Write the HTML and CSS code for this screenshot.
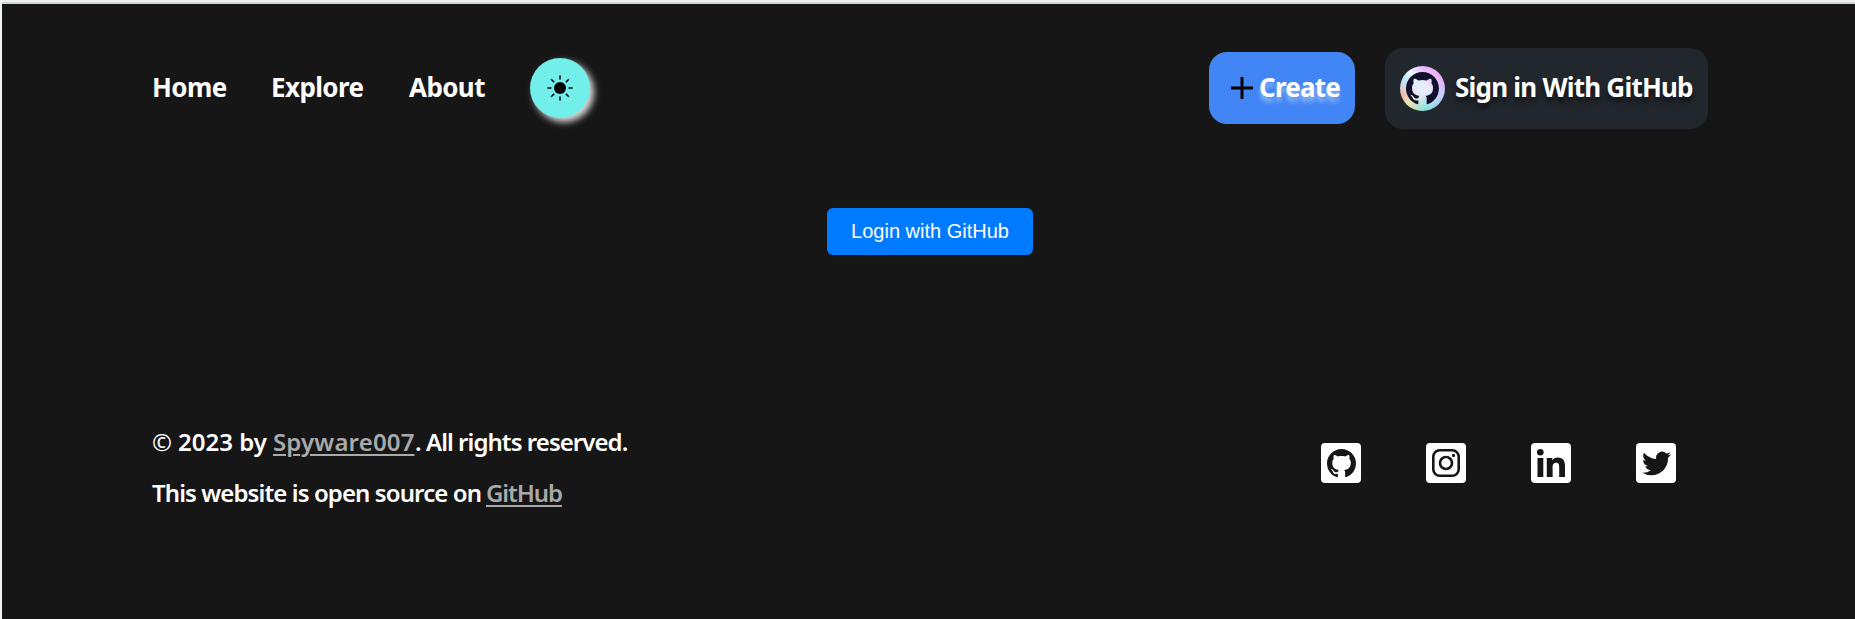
FILE: index.html
```html
<!DOCTYPE html>
<html lang="en">
<head>
<meta charset="utf-8">
<title>Login</title>
<link rel="stylesheet" href="styles.css">
</head>
<body>
<svg width="0" height="0" class="defs">
  <symbol id="octocat" viewBox="0 0 16 16"><path d="M8 0C3.58 0 0 3.58 0 8c0 3.54 2.29 6.53 5.47 7.59.4.07.55-.17.55-.38 0-.19-.01-.82-.01-1.49-2.01.37-2.53-.49-2.69-.94-.09-.23-.48-.94-.82-1.13-.28-.15-.68-.52-.01-.53.63-.01 1.08.58 1.23.82.72 1.21 1.87.87 2.33.66.07-.52.28-.87.51-1.07-1.78-.2-3.64-.89-3.64-3.95 0-.87.31-1.59.82-2.15-.08-.2-.36-1.02.08-2.12 0 0 .67-.21 2.2.82.64-.18 1.32-.27 2-.27s1.36.09 2 .27c1.53-1.04 2.2-.82 2.2-.82.44 1.1.16 1.92.08 2.12.51.56.82 1.27.82 2.15 0 3.07-1.87 3.75-3.65 3.95.29.25.54.73.54 1.48 0 1.07-.01 1.93-.01 2.2 0 .21.15.46.55.38A8.01 8.01 0 0 0 16 8c0-4.42-3.58-8-8-8z"/></symbol>
</svg>
<header class="header">
  <nav class="nav">
    <a class="nav-link home">Home</a>
    <a class="nav-link explore">Explore</a>
    <a class="nav-link about">About</a>
    <button class="toggle" aria-label="Toggle theme">
      <svg width="26" height="26" viewBox="0 0 26 26"><circle cx="13" cy="13" r="6"/><path d="M13 .5v4M13 21.500v4M.5 13h4M21.500 13h4M4.200 4.200l3 3M18.800 18.800l3 3M4.200 21.800l3-3M18.800 7.200l3-3" stroke="#000" stroke-width="1.500"/></svg>
    </button>
  </nav>
  <div class="actions">
    <button class="create">
      <svg width="22" height="22" viewBox="0 0 22 22"><path d="M11 0v22M0 11h22" stroke="#000" stroke-width="3"/></svg>
      <span class="create-text">Create</span>
    </button>
    <button class="signin">
      <span class="avatar"><svg width="33" height="33" fill="#10102a"><use href="#octocat"/></svg></span>
      <span class="signin-text">Sign in With GitHub</span>
    </button>
  </div>
</header>
<main class="main"><button class="login">Login with GitHub</button></main>
<footer class="footer">
  <div class="legal">
    <p class="line"><span class="copy">©</span><span class="year">2023 by</span><a class="link author">Spyware007</a><span class="rights">. All rights reserved.</span></p>
    <p class="line"><span class="source">This website is open source on</span><a class="link repo">GitHub</a></p>
  </div>
  <div class="social">
    <a class="tile"><svg width="29" height="29" fill="#161616"><use href="#octocat"/></svg></a>
    <a class="tile"><svg width="28" height="28" viewBox="0 0 28 28" fill="none" stroke="#161616" stroke-width="2.600"><rect x="1.300" y="1.300" width="25.400" height="25.400" rx="6.500"/><circle cx="14" cy="14" r="6"/><rect x="20" y="5" width="3" height="3" rx="1" fill="#161616" stroke="none"/></svg></a>
    <a class="tile"><svg width="28" height="28" viewBox="0 0 28 28" fill="#161616"><circle cx="3.300" cy="3.300" r="3.300"/><path d="M.5 9h5.800v19H.5zM9.800 9h5.500v2.600c.9-1.700 2.700-3 5.400-3 5.700 0 7.300 3.700 7.300 9V28h-5.800v-9.300c0-2.300 0-5-3.100-5s-3.500 2.400-3.500 4.900V28H9.800z"/></svg></a>
    <a class="tile"><svg width="29" height="29" viewBox="0 0 24 24" fill="#161616"><path d="M23.953 4.570a10 10 0 01-2.825.775 4.958 4.958 0 002.163-2.723c-.951.555-2.005.959-3.127 1.184a4.920 4.920 0 00-8.384 4.482C7.690 8.095 4.067 6.130 1.640 3.162a4.822 4.822 0 00-.666 2.475c0 1.710.87 3.213 2.188 4.096a4.904 4.904 0 01-2.228-.616v.060a4.923 4.923 0 003.946 4.827 4.996 4.996 0 01-2.212.085 4.936 4.936 0 004.604 3.417 9.867 9.867 0 01-6.102 2.105c-.390 0-.779-.023-1.170-.067a13.995 13.995 0 007.557 2.209c9.053 0 13.998-7.496 13.998-13.985 0-.210 0-.420-.015-.630A9.935 9.935 0 0024 4.590z"/></svg></a>
  </div>
</footer>
</body>
</html>
```
FILE: styles.css
```css
* { box-sizing: border-box; }
body {
  margin: 0;
  height: 619px;
  overflow: hidden;
  background: #161616;
  border-top: 2px solid #f0f2f2;
  border-left: 2px solid #f0f2f2;
  box-shadow: inset 0 2px #d0d6d8;
  color: #fff;
  font: 600 26px/36px "Noto Sans", "Open Sans", sans-serif;
  display: flex;
  flex-direction: column;
}
.defs { display: none; }
button { border: 0; padding: 0; font: inherit; color: inherit; display: flex; align-items: center; }
.header { display: flex; justify-content: space-between; align-items: center; height: 81px; margin: 46px 147px 0 150px; }
.nav, .actions { display: flex; align-items: center; }
.nav-link { white-space: nowrap; padding-bottom: 3px; letter-spacing: -.6px; font-weight: 700; }
.home { width: 119px; }
.explore { width: 138px; }
.about { width: 121px; }
.toggle { width: 60px; height: 60px; margin-bottom: 1px; justify-content: center; border-radius: 50%; background: #72eeeb; box-shadow: 4px 4px 7px #ddd; }
.actions { gap: 30px; }
.create { width: 146px; height: 72px; margin-bottom: 1px; padding-left: 22px; gap: 6px; border-radius: 18px; background: #4285f4; text-shadow: 0 5px 4px rgba(255,255,255,.4); }
.signin { width: 323px; height: 81px; padding-left: 15px; gap: 10px; border-radius: 18px; background: #22262d; text-shadow: 0 5px 4px rgba(0,0,0,.5); }
.create-text, .signin-text { white-space: nowrap; padding-bottom: 3px; font-weight: 700; }
.create-text { letter-spacing: -.8px; }
.signin-text { letter-spacing: -.78px; }
.avatar { width: 45px; height: 45px; flex: none; border-radius: 50%; display: grid; place-items: center; background: radial-gradient(circle, #e8edff 15%, transparent 65%), conic-gradient(#e5b6ff, #efacf5 15%, #c5c8ff 30%, #83e0dc 48%, #eee5a5 62%, #f1b8a8 70%, #b9e6ff 82%, #eef8ff 90%, #e5b6ff); }
.main { display: flex; justify-content: center; margin-top: 79px; }
.login { width: 206px; height: 47px; margin-left: 3px; justify-content: center; border-radius: 6px; background: #007bff; font: 400 20px "Liberation Sans", Arial, sans-serif; }
.footer { display: flex; justify-content: space-between; align-items: flex-start; margin: 169px 179px 0 150px; }
.line { display: flex; margin: 0 0 15px; font-size: 24px; line-height: 36px; white-space: nowrap; }
.copy { width: 26px; font-weight: 400; }
.year { width: 95px; }
.author { width: 142px; letter-spacing: .15px; }
.rights { letter-spacing: -.95px; }
.source { width: 334px; letter-spacing: -.9px; }
.repo { letter-spacing: -1.1px; }
.link { color: #aaa; text-decoration: underline; text-decoration-thickness: 2px; text-underline-offset: 3px; }
.social { display: flex; gap: 65px; margin-top: 19px; }
.tile { width: 40px; height: 40px; border-radius: 4px; background: #fff; display: grid; place-items: center; }
```
